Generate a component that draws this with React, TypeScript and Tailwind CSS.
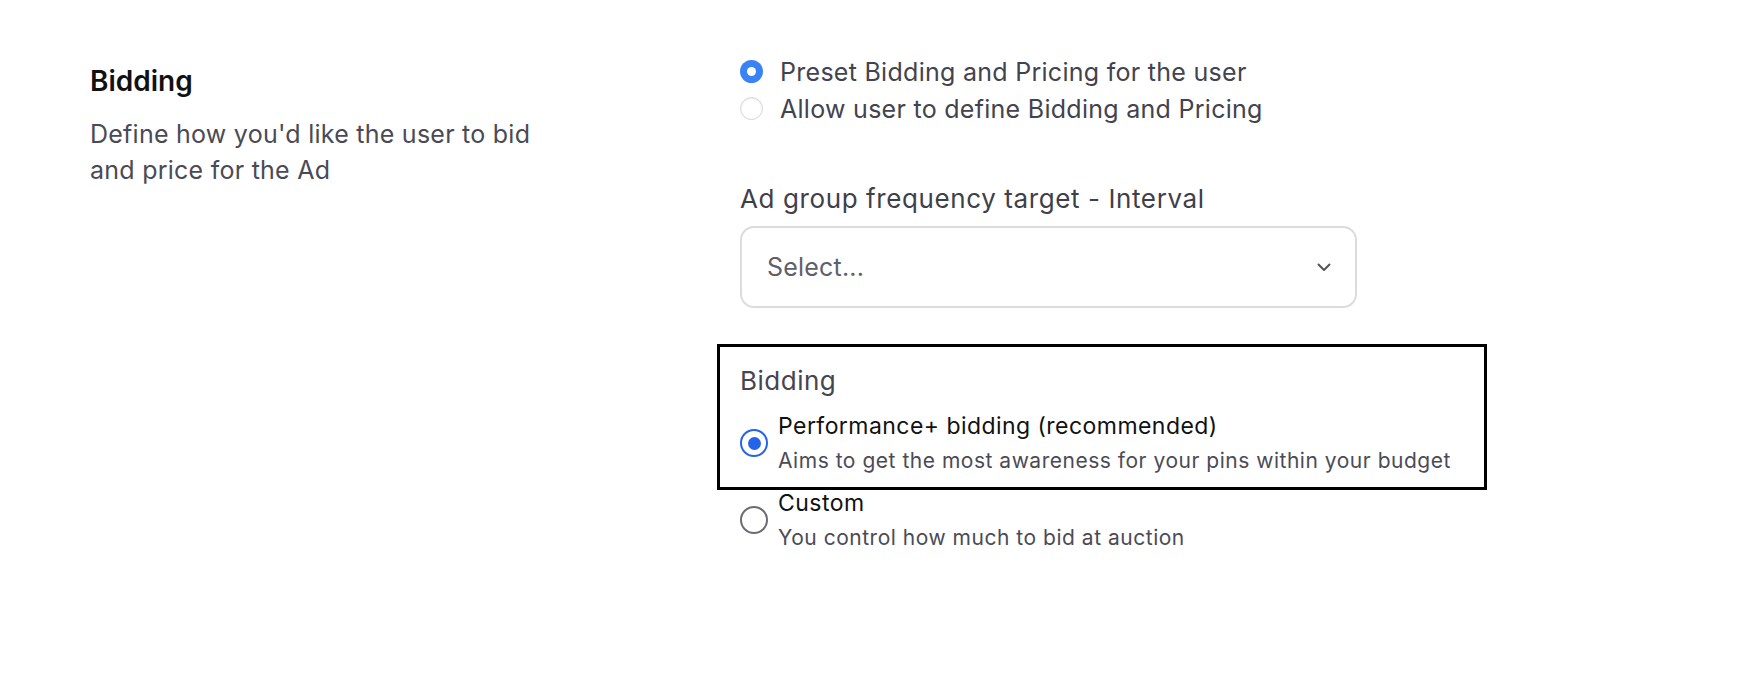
import React from "react";

function TopRadio({ checked, label }: { checked: boolean; label: string }) {
  return (
    <div className="flex h-[37px] items-center gap-[17px]">
      {checked ? (
        <span className="flex h-[23px] w-[23px] items-center justify-center rounded-full bg-[#3b82f6]">
          <span className="h-[9px] w-[9px] rounded-full bg-white" />
        </span>
      ) : (
        <span className="h-[23px] w-[23px] rounded-full border border-[#d4d4d8] bg-white shadow-[inset_0_1px_2px_rgba(0,0,0,0.08)]" />
      )}
      <span className="text-[25px] leading-[36px] tracking-[0.28px] text-[#43434e]">{label}</span>
    </div>
  );
}

function OptionRadio({
  checked,
  title,
  desc,
}: {
  checked: boolean;
  title: string;
  desc: string;
}) {
  return (
    <div className="flex items-center gap-[10px]">
      {checked ? (
        <span className="flex h-[28px] w-[28px] items-center justify-center rounded-full border-[2.5px] border-[#2563eb] bg-white">
          <span className="h-[13px] w-[13px] rounded-full bg-[#2563eb]" />
        </span>
      ) : (
        <span className="h-[28px] w-[28px] rounded-full border-[2.5px] border-[#6b6b75] bg-white" />
      )}
      <div className="flex flex-col">
        <span className="text-[23px] leading-[30px] tracking-[0.45px] text-[#111111]">{title}</span>
        <span className="mt-[6px] text-[21px] leading-[28px] tracking-[0.52px] text-[#4b4b56]">{desc}</span>
      </div>
    </div>
  );
}

export default function App() {
  return (
    <div
      className="flex h-[700px] w-full bg-white"
      style={{ fontFamily: "Inter, 'Noto Sans', sans-serif" }}
    >
      <div className="w-[740px] shrink-0 pl-[90px] pt-[63px]">
        <h2 className="text-[28px] font-semibold leading-[36px] text-[#111111]">Bidding</h2>
        <p className="mt-[17px] w-[470px] text-[25px] leading-[36px] tracking-[0.25px] text-[#4a4a55]">
          Define how you'd like the user to bid and price for the Ad
        </p>
      </div>

      <div className="flex flex-col pt-[53px]">
        <TopRadio checked label="Preset Bidding and Pricing for the user" />
        <TopRadio checked={false} label="Allow user to define Bidding and Pricing" />

        <label className="mt-[54px] text-[26px] leading-[36px] tracking-[0.6px] text-[#3f3f4a]">
          Ad group frequency target - Interval
        </label>
        <div className="mt-[9px] flex h-[82px] w-[617px] items-center justify-between rounded-[14px] border-2 border-[#dcdcde] bg-white pl-[25px] pr-[24px]">
          <span className="text-[25px] leading-[36px] tracking-[0.2px] text-[#5f5f6a]">Select...</span>
          <svg width="14" height="9" viewBox="0 0 14 9" fill="none">
            <path
              d="M1.5 1.5 L7 7 L12.5 1.5"
              stroke="#55555f"
              strokeWidth="2"
              strokeLinecap="round"
              strokeLinejoin="round"
            />
          </svg>
        </div>

        <div className="ml-[-23px] mt-[36px] w-[770px] border-[3px] border-black pb-[12px] pl-[20px] pt-[16px]">
          <div className="text-[26px] leading-[36px] tracking-[0.5px] text-[#45454f]">Bidding</div>
          <div className="mt-[12px]">
            <OptionRadio
              checked
              title="Performance+ bidding (recommended)"
              desc="Aims to get the most awareness for your pins within your budget"
            />
          </div>
        </div>
        <div className="mt-[-2px]">
          <OptionRadio
            checked={false}
            title="Custom"
            desc="You control how much to bid at auction"
          />
        </div>
      </div>
    </div>
  );
}
